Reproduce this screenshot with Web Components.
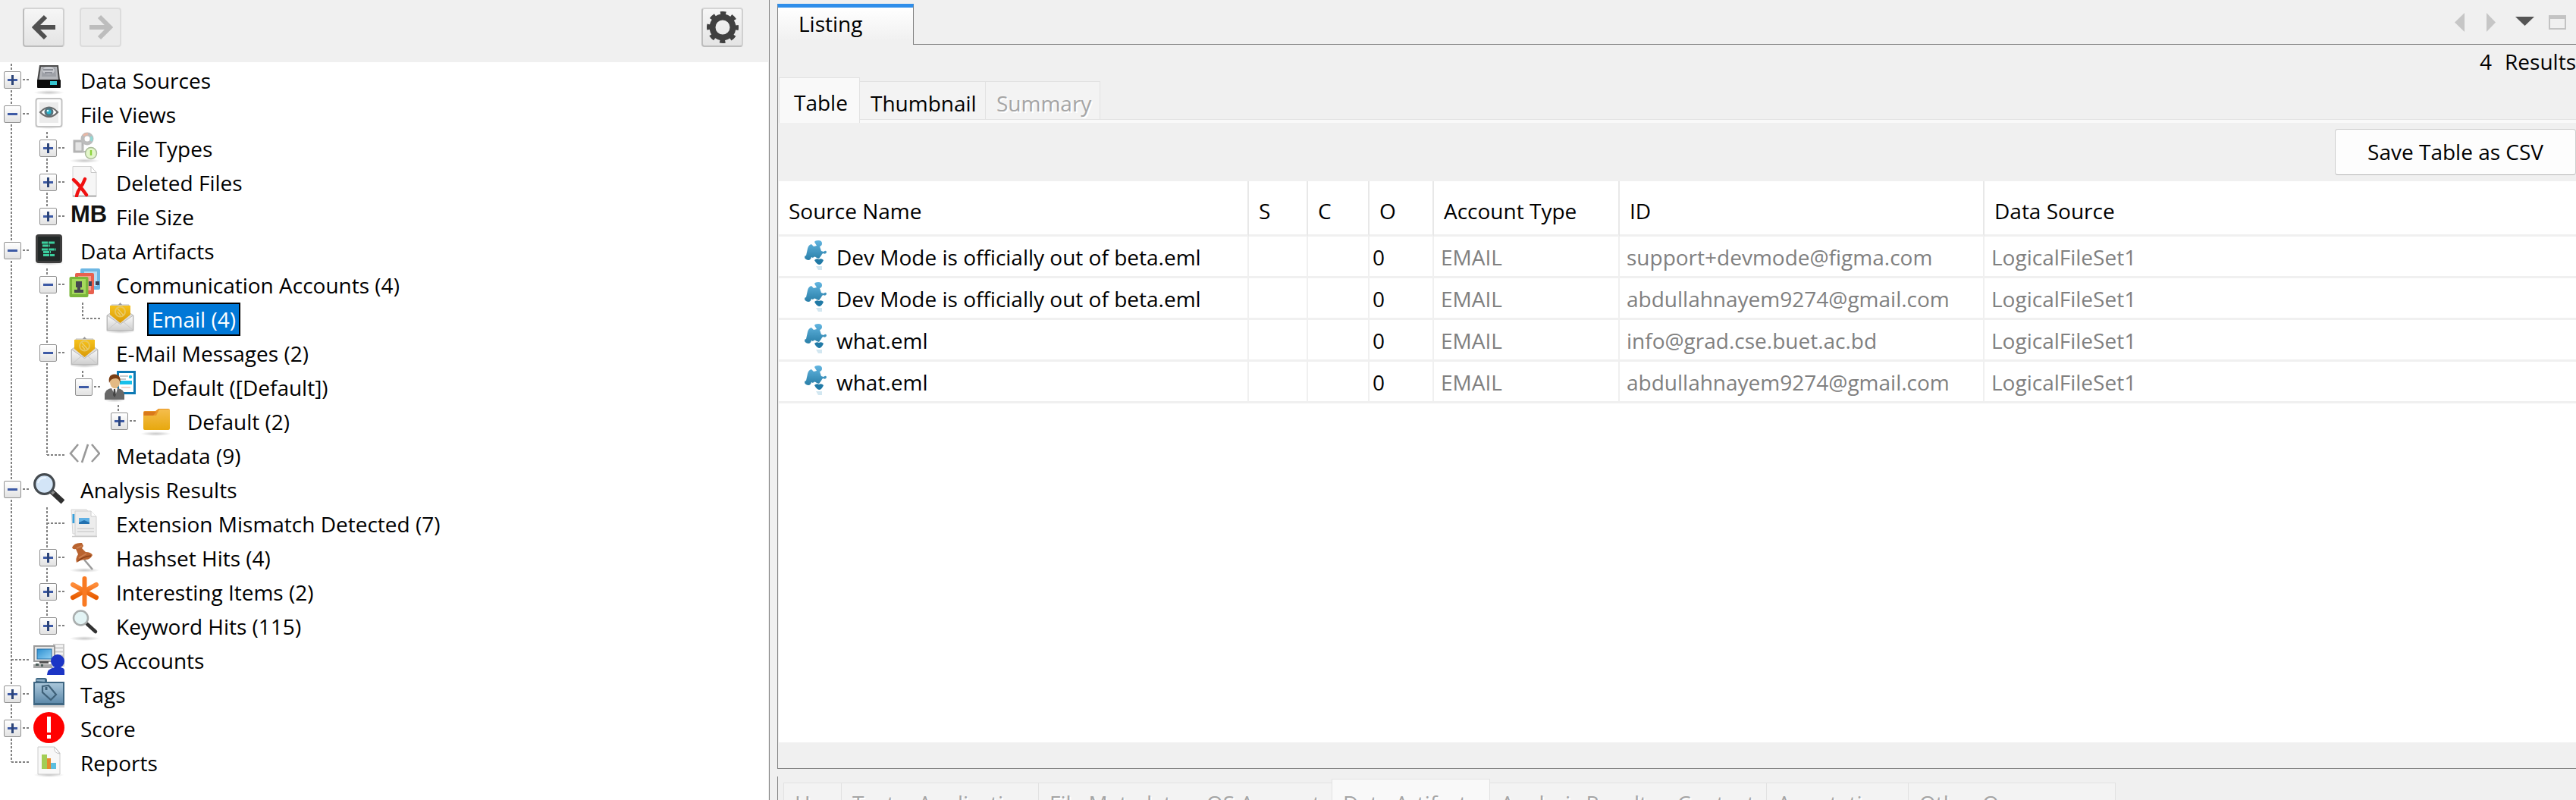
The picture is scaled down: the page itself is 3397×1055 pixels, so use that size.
<!DOCTYPE html>
<html lang="en">
<head>
<meta charset="utf-8">
<title>Case Viewer</title>
<style>
html, body { margin: 0; height: 100%; }
body { background: #f0f0f0; color: #000; font: 28px/45px "Open Sans", "Noto Sans", sans-serif; overflow: hidden; }
</style>
</head>
<body>
<case-viewer></case-viewer>

<template id="viewer-tpl">
<style>
:host { display: flex; height: 100vh; gap: 10px; overflow: hidden; background: #f0f0f0; }
.side { flex: 0 0 1015px; box-sizing: border-box; display: flex; flex-direction: column; border-right: 1px solid #828282; padding-right: 1px; }
.main { flex: 1; min-width: 0; display: flex; flex-direction: column; gap: 10px; padding-top: 5px; }
.upper { flex: 1; min-height: 0; }
.lower { flex: 0 0 31px; overflow: hidden; border-left: 1px solid #828282; padding: 3px 0 0 7px; box-sizing: border-box; }
</style>
<div class="side">
  <nav-toolbar></nav-toolbar>
  <case-tree>
    <tree-node label="Data Sources" icon="drive" state="closed"></tree-node>
    <tree-node label="File Views" icon="eye" state="open">
      <tree-node label="File Types" icon="types" state="closed"></tree-node>
      <tree-node label="Deleted Files" icon="deleted" state="closed"></tree-node>
      <tree-node label="File Size" icon="mb" state="closed" last></tree-node>
    </tree-node>
    <tree-node label="Data Artifacts" icon="artifacts" state="open">
      <tree-node label="Communication Accounts (4)" icon="accounts" state="open">
        <tree-node label="Email (4)" icon="mail" selected last></tree-node>
      </tree-node>
      <tree-node label="E-Mail Messages (2)" icon="mail" state="open">
        <tree-node label="Default ([Default])" icon="person" state="open" last>
          <tree-node label="Default (2)" icon="folder" state="closed" last></tree-node>
        </tree-node>
      </tree-node>
      <tree-node label="Metadata (9)" icon="code" last></tree-node>
    </tree-node>
    <tree-node label="Analysis Results" icon="search" state="open">
      <tree-node label="Extension Mismatch Detected (7)" icon="docs"></tree-node>
      <tree-node label="Hashset Hits (4)" icon="pin" state="closed"></tree-node>
      <tree-node label="Interesting Items (2)" icon="star" state="closed"></tree-node>
      <tree-node label="Keyword Hits (115)" icon="lens" state="closed" last></tree-node>
    </tree-node>
    <tree-node label="OS Accounts" icon="computer"></tree-node>
    <tree-node label="Tags" icon="tags" state="closed"></tree-node>
    <tree-node label="Score" icon="score" state="closed"></tree-node>
    <tree-node label="Reports" icon="report" last></tree-node>
  </case-tree>
</div>
<div class="main">
  <listing-panel class="upper">
    <tab-strip slot="tabs">
      <tab-item selected divider style="--w:107px">Table</tab-item>
      <tab-item divider style="--w:166px">Thumbnail</tab-item>
      <tab-item divider disabled style="--w:151px">Summary</tab-item>
    </tab-strip>
    <result-table></result-table>
  </listing-panel>
  <div class="lower">
    <tab-strip style="--tab-pad:3px">
      <tab-item divider disabled first style="--w:77px">Hex</tab-item>
      <tab-item disabled style="--w:87px">Text</tab-item>
      <tab-item divider disabled style="--w:173px">Application</tab-item>
      <tab-item disabled style="--w:207px">File Metadata</tab-item>
      <tab-item disabled style="--w:179px">OS Account</tab-item>
      <tab-item divider disabled selected style="--w:209px">Data Artifacts</tab-item>
      <tab-item disabled style="--w:233px">Analysis Results</tab-item>
      <tab-item divider disabled style="--w:132px">Context</tab-item>
      <tab-item divider disabled style="--w:187px">Annotations</tab-item>
      <tab-item divider disabled style="--w:273px">Other Occurrences</tab-item>
    </tab-strip>
  </div>
</div>
</template>

<script>
const GRADS = `
<linearGradient id="gold" x1="0" y1="0" x2="0" y2="1"><stop offset="0" stop-color="#f6c21c"/><stop offset="1" stop-color="#d99a08"/></linearGradient>
<linearGradient id="fold" x1="0" y1="0" x2="0" y2="1"><stop offset="0" stop-color="#f5bd4c"/><stop offset="1" stop-color="#e7a80e"/></linearGradient>
<linearGradient id="silver" x1="0" y1="0" x2="0" y2="1"><stop offset="0" stop-color="#fafafa"/><stop offset="1" stop-color="#cfcfcf"/></linearGradient>
<linearGradient id="steel" x1="0" y1="0" x2="0" y2="1"><stop offset="0" stop-color="#a9c6da"/><stop offset="1" stop-color="#5f8bab"/></linearGradient>
<linearGradient id="sky" x1="0" y1="0" x2="1" y2="1"><stop offset="0" stop-color="#2d8fd0"/><stop offset="1" stop-color="#8fd0f5"/></linearGradient>
<linearGradient id="org" x1="0" y1="0" x2="0" y2="1"><stop offset="0" stop-color="#ff8d3a"/><stop offset="1" stop-color="#e85c00"/></linearGradient>
<linearGradient id="puz" x1="0" y1="0" x2="0" y2="1"><stop offset="0" stop-color="#62b5e0"/><stop offset="1" stop-color="#2a7fa8"/></linearGradient>
<radialGradient id="shade"><stop offset="0" stop-color="#000" stop-opacity=".22"/><stop offset="1" stop-color="#000" stop-opacity="0"/></radialGradient>`;
const SHADOW = '<ellipse cx="20.5" cy="38" rx="20" ry="3" fill="url(#shade)"/>';
const ICONS = {
drive: SHADOW + `<path d="M8 2h25l2 20v9H5v-9z" fill="#4a4a4a"/><path d="M10 4h21l2 17H7.500z" fill="#b5b7bb"/><path d="M12 5h17l1 12H11z" fill="#9da0a6"/><ellipse cx="20" cy="9" rx="8" ry="5" fill="#c9cbd0"/><path d="M13 8h13M15 12h10" stroke="#777b82" stroke-width="1.500"/><rect x="5" y="21" width="31" height="11" rx="1" fill="#0b0b0b"/><rect x="22" y="23" width="9" height="5" fill="#35c4cf"/>`,
eye: SHADOW + `<rect x="3.500" y="1" width="34" height="37" rx="3" fill="#fdfdfd" stroke="#c2c2c2" stroke-width="2"/><rect x="8" y="6" width="25" height="27" fill="#ebebeb"/><path d="M9 19q12-13 23 0q-11 12-23 0z" fill="#fff" stroke="#6a6a6a" stroke-width="2.200"/><circle cx="20.500" cy="18.500" r="6" fill="#56737d"/><circle cx="20.500" cy="18.500" r="3" fill="#27b3cc"/><circle cx="19" cy="17" r="1.300" fill="#e4ffff"/>`,
types: SHADOW + `<path d="M7 12h11v14H7z" fill="#e4e4e4" stroke="#b3b3b3" stroke-width="3"/><path d="M18 18v8h8" fill="none" stroke="#b9b9b9" stroke-width="2"/><circle cx="24" cy="9" r="6" fill="none" stroke="#bcbcbc" stroke-width="5"/><path d="M19 5a6 6 0 0 1 6-2" fill="none" stroke="#e8b7a5" stroke-width="3"/><path d="M29 6a6 6 0 0 1 0 6" fill="none" stroke="#8fdad6" stroke-width="3"/><circle cx="29" cy="28" r="7.500" fill="#e3f6cb" stroke="#a9ba98" stroke-width="1.500"/><path d="M29 24v7" stroke="#8ed43d" stroke-width="2.500"/>`,
deleted: `<path d="M5 0.500h24l7 8V40.500H5z" fill="#f6f6f6" stroke="#d2d2d2"/><path d="M29 0.500v8h7z" fill="#fff" stroke="#c8c8c8"/><path d="M5 38.500h31v2H5z" fill="#b5b5b5"/><path d="M6 18q7 6 17 20M21 17q-3 8-7 13q-3 4-4 10" fill="none" stroke="#f01010" stroke-width="4.400" stroke-linecap="round"/>`,
artifacts: SHADOW + `<rect x="3" y="0" width="35" height="38" rx="4" fill="#3d3d3d"/><rect x="6" y="3" width="29" height="32" rx="1" fill="#222827"/><path d="M11 11h17M12 15h10M11 20h19M13 23.500h10M13 27.500h15" stroke="#3ccf9e" stroke-width="2.800" stroke-dasharray="8 1"/>`,
accounts: `<rect x="15" y="0" width="26" height="28" rx="2" fill="#6db7e4"/><rect x="20" y="4" width="17" height="19" fill="#b7dcf3"/><rect x="8" y="6" width="25" height="28" rx="2" fill="#e8604f"/><rect x="12" y="10" width="17" height="19" fill="#f59f92"/><path d="M35 17h5v5h-5zM26 17h4v6h-4z" fill="#34435c"/><rect x="0.500" y="11" width="25" height="27" rx="2" fill="#7bb73b"/><rect x="4" y="14" width="18" height="20" fill="#a5d95c"/><path d="M9 17h8v8h-2v3h4v4H7v-4h4v-3H9z" fill="#45454f"/>`,
mail: SHADOW + `<path d="M3 17L9 13V3h23v10l6 4v20H3z" fill="#dedede" stroke="#bdbdbd"/><path d="M18 3l2.500-3L23 3z" fill="#999"/><path d="M7 4h27v12L20.500 27 7 16z" fill="url(#gold)"/><circle cx="20.500" cy="12" r="6.500" fill="none" stroke="#e9c75e" stroke-width="2"/><path d="M17 8l8 9M17 12l4 5" stroke="#ebcd6e" stroke-width="1.500"/><path d="M3.500 17L20.500 28.500 37.500 17V36.500H3.500z" fill="url(#silver)" stroke="#b9b9b9"/><path d="M4 36l13-11M37 36L24 25" stroke="#c9c9c9"/>`,
person: `<ellipse cx="13" cy="39" rx="14" ry="2.500" fill="url(#shade)"/><rect x="17.500" y="1.500" width="22" height="28" fill="#fff" stroke="#0c79b4" stroke-width="3"/><path d="M20 7h11M20 11h8" stroke="#b8bcbf" stroke-width="1.500"/><circle cx="34" cy="8" r="2.200" fill="#14c4e8"/><rect x="20" y="13" width="16" height="5" fill="#18c0ea"/><path d="M22 22h12" stroke="#e8c7bd" stroke-width="1.500"/><path d="M0 38V30q2-6 9-7h8q8 1 9 8v7z" fill="#686868"/><path d="M9 23h8l-3 10z" fill="#fff"/><path d="M12 24h2l1 8-2 3-2-3z" fill="#444"/><ellipse cx="13.500" cy="15" rx="6.500" ry="8.500" fill="#e3ba84"/><path d="M6 16Q4 5 13 4.500 22 5 20.500 16 19 9 14 10 8 10 6 16z" fill="#7b3f14"/>`,
folder: SHADOW + `<path d="M4 10q0-2 2-2h14l4-3h13q2 0 2 2v24H4z" fill="#e99427"/><path d="M4 14h17l4-8h14v25q0 2-2 2H6q-2 0-2-2z" fill="url(#fold)"/><path d="M5 9h16l-4 5H5z" fill="#d9791b"/>`,
code: `<path d="M12 7L2 19l10 11M30 7l10 12-10 11M25 7l-8 24" fill="none" stroke="#999" stroke-width="2.600"/>`,
search: `<path d="M24 24L39 38" stroke="#303030" stroke-width="7"/><path d="M22 22l5 5" stroke="#8b8b8b" stroke-width="4"/><circle cx="14.500" cy="14.500" r="12.800" fill="#d3e5f7" stroke="#454b50" stroke-width="3.200"/><path d="M6 13q2-8 11-7" fill="none" stroke="#eef7ff" stroke-width="2"/>`,
docs: `<path d="M3 3h20l5 5v27H5z" fill="#f0f0f0" stroke="#d5d5d5"/><path d="M6 9v12" stroke="#38a0dc" stroke-width="3"/><path d="M8 5h21l7 7v26H8z" fill="#ededed" stroke="#d0d0d0"/><path d="M29 5v7h7" fill="#fff" stroke="#ccc"/><rect x="13" y="14" width="14" height="8" fill="#5fb0e4"/><path d="M13 20l7-3 7 3v2H13z" fill="#2371b0"/><path d="M11 28h22M11 32h22" stroke="#d7d7d7" stroke-width="2"/><path d="M4 38.500h33" stroke="#ccc" stroke-width="1.500"/>`,
pin: SHADOW + `<path d="M20 24L31 37" stroke="#9a9a9a" stroke-width="2.500"/><path d="M4 8q3-7 13-6l2 4-2 3 5 5q7 0 9 4-3 6-9 6-7 0-12 4-2-5 2-11l-3-7q-4 1-5-2z" fill="#b9632f"/><path d="M10 9l7-3M13 22l10-6" stroke="#cc7f50" stroke-width="2"/><path d="M12 26q6-6 17-7" stroke="#8c421a" stroke-width="1.500" fill="none"/>`,
star: `<path d="M5 12l31 17M36 12L5 29" stroke="url(#org)" stroke-width="6" stroke-linecap="round"/><path d="M20.500 4v34" stroke="#f97a22" stroke-width="6" stroke-linecap="round"/>`,
lens: SHADOW + `<path d="M24 19L35 29" stroke="#333" stroke-width="4.500" stroke-linecap="round"/><circle cx="15.500" cy="11" r="9.500" fill="#e3f4f5" stroke="#a9aeae" stroke-width="2.500"/>`,
computer: `<rect x="26" y="0" width="15" height="30" fill="#c9c9c9"/><path d="M28 3h11M28 8h11M28 13h11" stroke="#f4f4f4" stroke-width="3"/><rect x="1" y="3" width="27" height="20" fill="#e6e6e6" stroke="#9a9a9a" stroke-width="2"/><rect x="5" y="7" width="19" height="13" fill="url(#sky)" stroke="#246fa5"/><path d="M8 23h12v3H8z" fill="#555"/><path d="M0 27h24l2 5H0z" fill="#a8a8a8"/><path d="M3 26h4v3H3zM10 27h3v3h-3z" fill="#4c5d59"/><circle cx="32" cy="23" r="9" fill="#1c35c5"/><path d="M18 41q0-8 10-10h8q5 1 5 4v6z" fill="#1c35c5"/><path d="M28 28h8v6h-8z" fill="#1c35c5"/>`,
tags: `<path d="M0 36V5h3V2q0-2 2-2h10q3 0 3 3v2h23v31z" fill="#3f6783"/><path d="M4 4V2h11v3z" fill="#8fb0c6"/><rect x="2" y="7" width="37" height="26" fill="url(#steel)"/><path d="M12 11l8-1 10 12-7 7L12 19z" fill="none" stroke="#3f6179" stroke-width="2.200"/><path d="M15.500 12v4h3v-4z" fill="#3f6179"/><path d="M0 37.500h41" stroke="#d0d0d0" stroke-width="3"/>`,
score: `<circle cx="20.500" cy="20.500" r="20.500" fill="#f00"/><path d="M18 6h5v21h-5z" fill="#fff"/><rect x="18" y="30" width="5" height="5" fill="#fff"/>`,
report: SHADOW + `<path d="M6 1h22l7 8v28H6z" fill="#f8f8f8" stroke="#ccc"/><path d="M28 1q-2 8 7 9z" fill="#fff" stroke="#c5c5c5"/><rect x="11" y="11" width="7" height="19" fill="#a3cd55"/><rect x="18" y="16" width="5" height="14" fill="#e68a2e"/><rect x="23" y="22" width="7" height="8" fill="#5bbfe0"/>`,
puzzle: `<path d="M18 2q1-2 5-2 5 0 5 4 0 3-3 4l2 6 3 1q4-3 4 1-2 3-4 1-2 0-3 3l-3 4-3-1q-3-3-5 0l-2-1q-1 4-4 4-5-1-5-4 0-2 2-2l2-9q1-5 5-6l3 3 4-1q-2-3-3-5z" fill="url(#puz)"/><path d="M18 26q3-3 6-1 3-2 6 1-2 5-5 6-4 0-7-6z" fill="#217aa6"/><path d="M20 34h8v5h-5z" fill="#8fc3db" opacity=".4"/>`
};

class CaseIcon extends HTMLElement {
  connectedCallback() {
    const root = this.attachShadow({ mode: 'open' });
    const name = this.getAttribute('name');
    const style = '<style>:host{display:block;flex:none;width:41px;height:41px}svg{display:block}b{font:bold 31px/37px "Liberation Sans",sans-serif;color:#111;padding-left:2px;display:block;white-space:nowrap}</style>';
    root.innerHTML = style + (name === 'mb' ? '<b>MB</b>' :
      `<svg width="41" height="41" viewBox="0 0 41 41" aria-hidden="true"><defs>${GRADS}</defs>${ICONS[name]}</svg>`);
  }
}

class CaseTree extends HTMLElement {
  connectedCallback() {
    this.attachShadow({ mode: 'open' }).innerHTML =
      '<style>:host{display:block;flex:1;background:#fff;padding-top:2px;overflow:hidden}</style><div role="tree"><slot></slot></div>';
  }
}

class TreeNode extends HTMLElement {
  connectedCallback() {
    const state = this.getAttribute('state');
    const label = this.getAttribute('label');
    const handle = state ? `<button aria-label="Toggle ${label}" aria-expanded="${state === 'open'}"><svg width="21" height="21" viewBox="0 0 21 21"><path d="M4 10.500h13" stroke="#3d5aa5" stroke-width="3"/>${state === 'closed' ? '<path d="M10.500 4v13" stroke="#2c4477" stroke-width="3"/>' : ''}</svg></button>` : '';
    this.attachShadow({ mode: 'open' }).innerHTML = `<style>
:host { display: block; background: repeating-linear-gradient(#808080 0 3px, transparent 3px 5px) 14px 0 / 2px 100% no-repeat; }
:host([last]) { background-size: 2px 21px; }
.row { display: flex; height: 45px; background: repeating-linear-gradient(90deg, #808080 0 3px, transparent 3px 5px) 15px 20px / 24px 2px no-repeat; }
.handle { width: 39px; padding: 10px 0 0 5px; flex: none; }
button { display: block; width: 23px; height: 23px; padding: 0; border: 1px solid #919191; border-radius: 2px; background: linear-gradient(#fff, #e2e2e2); }
button svg { display: block; }
.label { padding: 0 4px; margin-left: 17px; white-space: nowrap; }
:host([selected]) .label { background: #0078d7; color: #fff; outline: 2px solid #000; outline-offset: -2px; height: 44px; padding: 0 6px; margin-left: 15px; }
.kids { margin-left: 47px; }
</style><div class="row" role="treeitem"><div class="handle">${handle}</div><case-icon name="${this.getAttribute('icon')}"></case-icon><span class="label">${label}</span></div><div class="kids" role="group"><slot></slot></div>`;
  }
}

class NavToolbar extends HTMLElement {
  connectedCallback() {
    this.attachShadow({ mode: 'open' }).innerHTML = `<style>
:host { display: flex; height: 82px; box-sizing: border-box; padding: 10px 33px 0 30px; gap: 20px; align-items: flex-start; background: #f0f0f0; }
button { width: 55px; height: 52px; padding: 0; border: 2px solid #bdbdbd; border-top-color: #d4d4d4; border-right-color: #d0d0d0; border-radius: 4px; background: linear-gradient(#f6f6f6, #e4e4e4); display: grid; place-items: center; }
button:disabled { border-color: #dcdcdc; background: #ebebeb; }
.gear { margin-left: auto; }
</style>
<button aria-label="Back"><svg width="32" height="34" viewBox="0 0 32 34"><path d="M18 3L4 17l14 14M5 17h26" fill="none" stroke="#505050" stroke-width="6"/></svg></button>
<button aria-label="Forward" disabled><svg width="32" height="34" viewBox="0 0 32 34"><path d="M14 3l14 14-14 14M27 17H1" fill="none" stroke="#bdbdbd" stroke-width="6"/></svg></button>
<button aria-label="Options" class="gear"><svg width="42" height="42" viewBox="0 0 42 42"><circle cx="21" cy="21" r="13.500" fill="none" stroke="#404040" stroke-width="8"/><circle cx="21" cy="21" r="18" fill="none" stroke="#404040" stroke-width="6" stroke-dasharray="7.070 7.070" stroke-dashoffset="3.500"/></svg></button>`;
  }
}

class TabStrip extends HTMLElement {
  connectedCallback() {
    this.attachShadow({ mode: 'open' }).innerHTML = `<style>
:host { display: flex; height: 60px; background: linear-gradient(#e2e2e2 0 1px, #f9f9f9 1px) 0 100% / 100% 5px no-repeat; }
</style><slot></slot>`;
  }
}

class TabItem extends HTMLElement {
  connectedCallback() {
    this.attachShadow({ mode: 'open' }).innerHTML = `<style>
:host { display: block; flex: none; width: var(--w); margin: 5px 0; }
:host([selected]) { margin: 0; }
button { display: block; width: 100%; height: 100%; box-sizing: border-box; font: inherit; line-height: 45px; color: inherit; text-align: left; padding: var(--tab-pad, 6px) 0 0 14px; border: 0 solid #e2e2e2; border-top-width: 1px; background: #f3f3f3; white-space: nowrap; }
:host([divider]) button { border-right-width: 1px; }
:host([first]) button, :host([selected]) button { border-left-width: 1px; }
:host([selected]) button { background: #f9f9f9; }
:host([selected]:not([disabled])) button { padding-left: 19px; }
button:disabled { color: #a5a5a5; text-shadow: 2px 2px 0 #fff; }
</style><button role="tab" aria-selected="${this.hasAttribute('selected')}" ${this.hasAttribute('disabled') ? 'disabled' : ''}><slot></slot></button>`;
  }
}

class ListingPanel extends HTMLElement {
  connectedCallback() {
    this.attachShadow({ mode: 'open' }).innerHTML = `<style>
:host { display: flex; flex-direction: column; }
header { display: flex; flex: 0 0 54px; }
.tab { width: 180px; box-sizing: border-box; border: 0; border-top: 5px solid #2f8eea; border-left: 1px solid #828282; border-right: 1px solid #828282; background: linear-gradient(#fff, #f0f0f0 90%); font: inherit; line-height: 43px; padding: 0 0 6px 27px; text-align: left; }
.rest { flex: 1; display: flex; justify-content: flex-end; gap: 18px; padding-right: 12px; border-bottom: 1px solid #828282; }
.rest button { width: 25px; height: 48px; padding: 0; border: 0; background: none; }
.rest svg { display: block; }
.body { flex: 1; min-height: 0; display: flex; flex-direction: column; border-left: 1px solid #828282; border-bottom: 1px solid #828282; padding: 0 0 34px 1px; }
.count { display: flex; justify-content: flex-end; gap: 17px; height: 43px; white-space: nowrap; }
.save { display: flex; justify-content: flex-end; align-items: flex-start; padding: 8px 0; }
.save button { height: 61px; font: inherit; color: inherit; padding: 0 42px; border: 1px solid #cdcdcd; border-bottom-color: #b5b5b5; border-radius: 4px; background: #fdfdfd; white-space: nowrap; }
</style>
<header><button class="tab" role="tab" aria-selected="true">Listing</button><div class="rest">
<button aria-label="Previous" disabled><svg width="25" height="48"><path d="M19 12v25L6 24.500z" fill="#c6c6c6"/></svg></button>
<button aria-label="Next" disabled><svg width="25" height="48"><path d="M5 12v25l12-12.500z" fill="#c6c6c6"/></svg></button>
<button aria-label="Documents"><svg width="25" height="48"><path d="M0 17h25L12.500 29z" fill="#555"/></svg></button>
<button aria-label="Maximize" disabled><svg width="25" height="48"><path d="M1 15h23v19H1zM3 20v12h19V20z" fill="#c3c3c3" fill-rule="evenodd"/></svg></button>
</div></header>
<div class="body"><div class="count"><span>4</span><span>Results</span></div><slot name="tabs"></slot><div class="save"><button>Save Table as CSV</button></div><slot></slot></div>`;
  }
}

const ROWS = [
  ['Dev Mode is officially out of beta.eml', 'support+devmode@figma.com'],
  ['Dev Mode is officially out of beta.eml', 'abdullahnayem9274@gmail.com'],
  ['what.eml', 'info@grad.cse.buet.ac.bd'],
  ['what.eml', 'abdullahnayem9274@gmail.com']
];
class ResultTable extends HTMLElement {
  connectedCallback() {
    const heads = ['Source Name', 'S', 'C', 'O', 'Account Type', 'ID', 'Data Source'];
    const widths = [620, 78, 81, 85, 245, 481];
    this.attachShadow({ mode: 'open' }).innerHTML = `<style>
:host { display: block; flex: 1; min-height: 0; background: #fff; }
table { width: 100%; table-layout: fixed; border-collapse: separate; border-spacing: 0; }
th, td { font-weight: 400; text-align: left; padding: 0 0 0 9px; border-right: 2px solid #f0f0f0; border-bottom: 3px solid #f0f0f0; white-space: nowrap; box-sizing: border-box; }
th { height: 73px; padding: 9px 0 0 13px; border-right-color: #e8e8e8; }
td { height: 55px; padding-top: 3px; color: #808080; }
th:last-child, td:last-child { border-right: 0; }
td:nth-child(-n+4) { color: #000; }
td:nth-child(4) { padding-left: 4px; }
.name { display: flex; gap: 6px; padding-left: 20px; height: 45px; }
</style><table><colgroup>${widths.map(w => `<col style="width:${w}px">`).join('')}<col></colgroup>
<thead><tr>${heads.map(h => `<th>${h}</th>`).join('')}</tr></thead>
<tbody>${ROWS.map(([name, id]) => `<tr><td><div class="name"><case-icon name="puzzle"></case-icon><span>${name}</span></div></td><td></td><td></td><td>0</td><td>EMAIL</td><td>${id}</td><td>LogicalFileSet1</td></tr>`).join('')}</tbody></table>`;
  }
}

class CaseViewer extends HTMLElement {
  connectedCallback() {
    this.attachShadow({ mode: 'open' }).append(document.getElementById('viewer-tpl').content.cloneNode(true));
  }
}

customElements.define('case-icon', CaseIcon);
customElements.define('tree-node', TreeNode);
customElements.define('case-tree', CaseTree);
customElements.define('nav-toolbar', NavToolbar);
customElements.define('tab-item', TabItem);
customElements.define('tab-strip', TabStrip);
customElements.define('result-table', ResultTable);
customElements.define('listing-panel', ListingPanel);
customElements.define('case-viewer', CaseViewer);
</script>
</body>
</html>
